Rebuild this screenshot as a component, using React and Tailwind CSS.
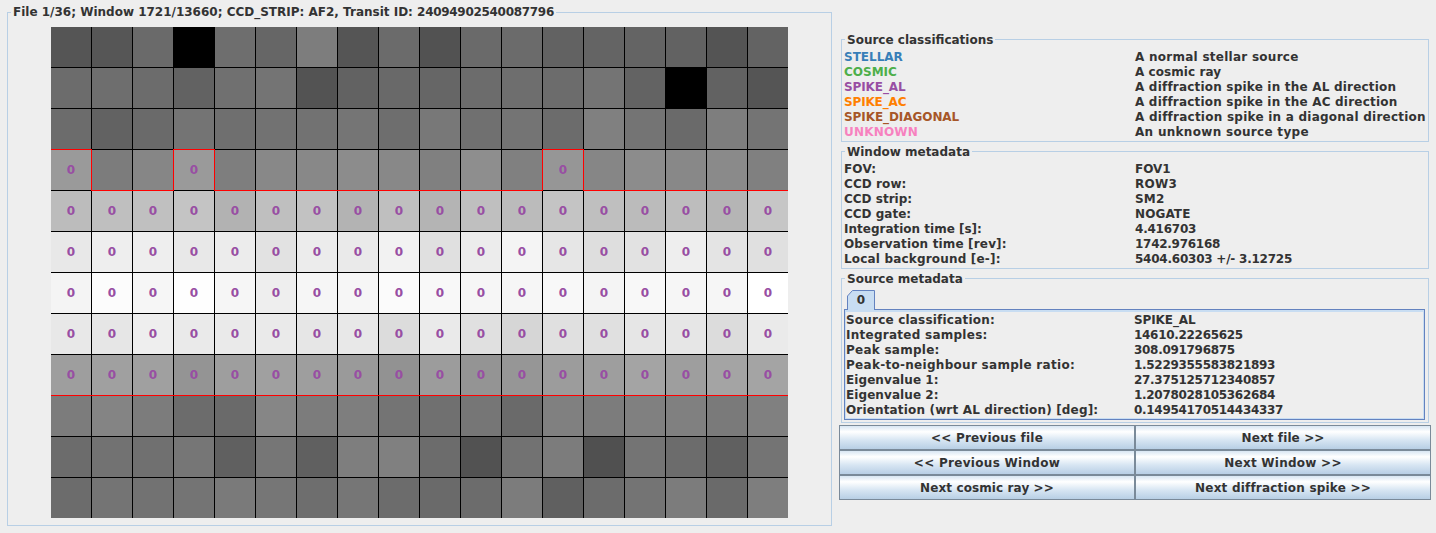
const GRAYS = [
  ['55','56','6a','00','6e','66','7d','55','6b','52','6a','6b','62','64','64','62','54','63'],
  ['6c','6e','6c','62','70','74','53','62','69','66','6c','6e','6c','74','63','00','62','55'],
  ['6c','62','6a','74','6f','72','72','75','6e','78','70','74','6c','80','74','6a','7e','74'],
  ['9a','7c','86','9a','7e','88','88','8c','88','80','8e','80','96','86','8c','88','8a','80'],
  ['bc','bf','c0','c4','b2','bf','c2','b3','bf','b4','bf','bb','c4','bf','bb','bd','b5','c6'],
  ['e8','ee','ee','e8','ec','e2','ec','ea','f2','e0','ec','f4','e6','de','e2','ee','e4','e0'],
  ['f4','fc','f6','fe','f6','ee','f6','f6','fb','f8','f6','f6','f8','f4','f8','f6','f6','ff'],
  ['e8','e6','ee','ea','ea','ea','e6','e8','dc','ea','e0','d6','e0','e0','e6','e6','dc','ea'],
  ['9e','a0','a0','94','9e','a0','9e','9a','92','9c','94','96','9c','9e','a4','9e','a4','a4'],
  ['7c','84','7c','6c','6a','86','7c','7e','74','70','76','6a','80','7c','80','80','7a','80'],
  ['6c','72','70','76','60','76','60','7e','80','6c','52','72','7c','50','74','6c','60','74'],
  ['6c','74','72','74','7a','76','6e','76','6c','6a','6c','7c','60','6c','74','7c','6a','7e'],
];

const hasZero = (r, c) => (r >= 4 && r <= 8) || (r === 3 && (c === 0 || c === 3 || c === 12));

const CLASSES = [
  ['STELLAR', 'A normal stellar source', 'text-[#377eb8]', '', 'tracking-[0.26px]'],
  ['COSMIC', 'A cosmic ray', 'text-[#4daf4a]', '', 'tracking-[0.06px]'],
  ['SPIKE_AL', 'A diffraction spike in the AL direction', 'text-[#984ea3]', 'tracking-[-0.1px]', 'tracking-[0.2px]'],
  ['SPIKE_AC', 'A diffraction spike in the AC direction', 'text-[#ff7f00]', 'tracking-[-0.15px]', 'tracking-[0.2px]'],
  ['SPIKE_DIAGONAL', 'A diffraction spike in a diagonal direction', 'text-[#a65628]', 'tracking-[-0.07px]', 'tracking-[0.24px]'],
  ['UNKNOWN', 'An unknown source type', 'text-[#f781bf]', 'tracking-[0.2px]', 'tracking-[0.3px]'],
];

const WINDOW = [
  ['FOV:', 'FOV1', '', 'tracking-[0.15px]', ''],
  ['CCD row:', 'ROW3', '', 'tracking-[0.08px]', 'tracking-[0.3px]'],
  ['CCD strip:', 'SM2', '', '', 'tracking-[0.2px]'],
  ['CCD gate:', 'NOGATE', '', '', 'tracking-[0.1px]'],
  ['Integration time [s]:', '4.416703', '', '', 'tracking-[-0.22px]'],
  ['Observation time [rev]:', '1742.976168', '', 'tracking-[0.16px]', 'tracking-[-0.27px]'],
  ['Local background [e-]:', '5404.60303 +/- 3.12725', '', 'tracking-[0.18px]', 'tracking-[-0.23px]'],
];

const SOURCE = [
  ['Source classification:', 'SPIKE_AL', '', 'tracking-[0.2px]', 'tracking-[-0.1px]'],
  ['Integrated samples:', '14610.22265625', '', 'tracking-[0.26px]', 'tracking-[-0.3px]'],
  ['Peak sample:', '308.091796875', '', 'tracking-[0.25px]', 'tracking-[-0.3px]'],
  ['Peak-to-neighbour sample ratio:', '1.5229355583821893', '', 'tracking-[0.29px]', 'tracking-[-0.3px]'],
  ['Eigenvalue 1:', '27.375125712340857', '', 'tracking-[0.08px]', 'tracking-[-0.3px]'],
  ['Eigenvalue 2:', '1.2078028105362684', '', 'tracking-[0.08px]', 'tracking-[-0.3px]'],
  ['Orientation (wrt AL direction) [deg]:', '0.14954170514434337', '', 'tracking-[0.16px]', 'tracking-[-0.3px]'],
];

const BUTTONS = [
  ['<< Previous file', 'tracking-[0.2px]'],
  ['Next file >>', 'tracking-[0.1px]'],
  ['<< Previous Window', 'tracking-[0.3px]'],
  ['Next Window >>', 'tracking-[0.25px]'],
  ['Next cosmic ray >>', 'tracking-[0.1px]'],
  ['Next diffraction spike >>', 'tracking-[0.2px]'],
];

function Rows({ rows, cols }) {
  return (
    <div className={`grid ${cols} auto-rows-[15px] leading-[15px]`}>
      {rows.map(([a, b, color, ta, tb]) => [
        <div key={a} className={`whitespace-nowrap ${color} ${ta}`}>{a}</div>,
        <div key={a + 'v'} className={`whitespace-nowrap ${tb}`}>{b}</div>,
      ])}
    </div>
  );
}

function Panel({ title, className, children }) {
  return (
    <fieldset className={`border border-[#b8cfe5] min-w-0 ${className}`}>
      <legend className="ml-[1px] px-[2px] pt-[2px] leading-[14px] whitespace-nowrap">{title}</legend>
      {children}
    </fieldset>
  );
}

export default function App() {
  return (
    <div className="w-[1436px] h-[533px] overflow-hidden bg-[#eeeeee] text-[#333333] text-[12px] font-bold font-['DejaVu_Sans',sans-serif] flex">
      <div className="w-[839px] shrink-0 pl-[7px] pt-[6px]">
        <fieldset className="border border-[#b8cfe5] w-[825px] h-[520px] flex justify-center min-w-0">
          <legend className="ml-[3px] px-[2px] leading-[13px] whitespace-nowrap">
            File 1/36; Window 1721/13660; CCD_STRIP: AF2, Transit ID: <span className="tracking-[-0.3px]">24094902540087796</span>
          </legend>
          <div className="relative w-[737px] h-[491px] mx-auto mt-[8px]">
            <div className="grid grid-cols-[repeat(18,40px)] grid-rows-[repeat(12,40px)] gap-px bg-black w-[737px] h-[491px]">
              {GRAYS.flatMap((row, r) =>
                row.map((g, c) => (
                  <div
                    key={`${r}-${c}`}
                    className="flex items-center justify-center text-[#984ea3] leading-none"
                    style={{ backgroundColor: `#${g}${g}${g}` }}
                  >
                    {hasZero(r, c) ? '0' : ''}
                  </div>
                ))
              )}
            </div>
            <svg className="absolute left-0 top-0" width="737" height="491" viewBox="0 0 737 491" fill="none" stroke="#ff0000" strokeWidth="1" shapeRendering="crispEdges">
              <path d="M0 122.5H40.5V163.5H122.5V122.5H163.5V163.5H491.5V122.5H532.5V163.5H737" />
              <path d="M0 368.5H737" />
            </svg>
          </div>
        </fieldset>
      </div>

      <div className="w-[592px] shrink-0 pt-[31px]">
        <div className="ml-[2px] w-[588px] flex flex-col">
          <Panel title="Source classifications" className="h-[111px] pl-[2px] pt-[3px]">
            <Rows rows={CLASSES} cols="grid-cols-[291px_1fr]" />
          </Panel>
          <Panel title="Window metadata" className="h-[126px] mt-[1px] pl-[2px] pt-[3px]">
            <Rows rows={WINDOW} cols="grid-cols-[291px_1fr]" />
          </Panel>
          <Panel title="Source metadata" className="h-[153px] mt-[1px] pl-[2px] pr-[3px]">
            <div className="flex pl-[3px] h-[19px] mt-[4px]">
              <div className="relative w-[28px] h-[20px] flex items-center justify-center pb-[1px]">
                <svg className="absolute left-0 top-0" width="28" height="20" viewBox="0 0 28 20">
                  <path d="M0.5 20V6L5.5 0.5H27.5V20Z" fill="#c8ddf2" stroke="#6382bf" strokeWidth="1" />
                  <path d="M1 19.5H27" stroke="#c8ddf2" strokeWidth="1.5" />
                </svg>
                <span className="relative">0</span>
              </div>
            </div>
            <div className="border border-[#6382bf] h-[111px]">
              <div className="border border-t-[2px] border-[#c8ddf2] pt-[1px] h-full">
                <Rows rows={SOURCE} cols="grid-cols-[288px_1fr]" />
              </div>
            </div>
          </Panel>
        </div>
        <div className="grid grid-cols-2 grid-rows-[repeat(3,25px)] w-[592px] mt-[2px]">
          {BUTTONS.map(([b, t]) => (
            <button
              key={b}
              className={`border border-[#7a8a99] font-bold text-[#333333] bg-[linear-gradient(to_bottom,#d8e6f3_0%,#ffffff_25%,#d8e6f3_60%,#b8cfe5_100%)] ${t}`}
            >
              {b}
            </button>
          ))}
        </div>
      </div>
    </div>
  );
}
